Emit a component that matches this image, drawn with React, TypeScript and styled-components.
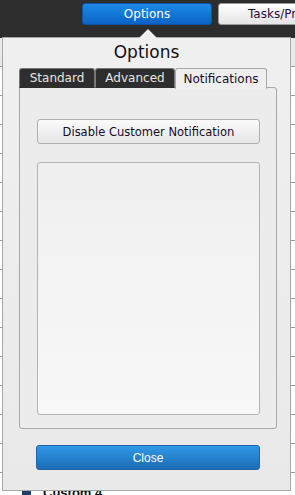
import React from "react";
import styled, {createGlobalStyle} from "styled-components";

const GlobalStyle = createGlobalStyle`
  html, body {
    margin: 0;
    padding: 0;
    background: #ffffff;
    font-family: "DejaVu Sans", Verdana, sans-serif;
  }
`

const Page = styled.div`
  position: relative;
  width: 295px;
  height: 495px;
  overflow: hidden;
  background: #ffffff;
`

const TopBar = styled.div`
  height: 30px;
  background: #2d2d2d;
  display: flex;
  align-items: flex-start;
  padding: 3px 0 0 82px;
  box-sizing: border-box;
  gap: 6px;
`

const TopButton = styled.div<{primary?: boolean}>`
  height: 22px;
  box-sizing: border-box;
  display: flex;
  align-items: center;
  font-size: 12px;
  border-radius: 3px;
  flex-shrink: 0;
  white-space: nowrap;
  color: ${p => p.primary ? '#ffffff' : '#2a0b3a'};
  width: ${p => p.primary ? '130px' : '90px'};
  padding-left: ${p => p.primary ? '0' : '29px'};
  justify-content: ${p => p.primary ? 'center' : 'flex-start'};
  background: ${p => p.primary
    ? 'linear-gradient(#1c8ae8, #0a63c4)'
    : 'linear-gradient(#ffffff, #e4e4e4)'};
  border: 1px solid ${p => p.primary ? '#0a55a8' : '#9a9a9a'};
`

const SubBar = styled.div`
  height: 8px;
  background: #2d2d2d;
`

const List = styled.div`
  display: flex;
  flex-direction: column;
`

const ListRow = styled.div<{tone: string}>`
  height: 28px;
  border-bottom: 1px solid #9a9a9a;
  background: ${p => p.tone};
`

const Footer = styled.div`
  position: absolute;
  left: 22px;
  bottom: -5px;
  display: flex;
  align-items: center;
  gap: 12px;
  font-family: "Liberation Sans", Arial, sans-serif;
  font-weight: bold;
  font-size: 13px;
  color: #111;
`

const Swatch = styled.div`
  width: 9px;
  height: 9px;
  background: #1d3d6a;
`

const Popover = styled.div`
  position: absolute;
  left: 2px;
  top: 37px;
  width: 289px;
  height: 454px;
  box-sizing: border-box;
  border: 1px solid #a8a8a8;
  background: linear-gradient(#f0f0f0, #e9e9e9);
  display: flex;
  flex-direction: column;
  padding: 0 14px 0 16px;
`

const Arrow = styled.div`
  position: absolute;
  top: -9px;
  left: 136px;
  width: 0;
  height: 0;
  border-left: 9px solid transparent;
  border-right: 9px solid transparent;
  border-bottom: 9px solid #f0f0f0;
`

const Title = styled.div`
  text-align: center;
  font-size: 17px;
  color: #111;
  height: 30px;
  line-height: 28px;
  padding-right: 2px;
`

const TabRow = styled.div`
  display: flex;
  height: 20px;
  position: relative;
  z-index: 1;
`

const Tab = styled.div<{active?: boolean; w: number}>`
  width: ${p => p.w}px;
  box-sizing: border-box;
  display: flex;
  align-items: center;
  justify-content: center;
  font-size: 12px;
  border-radius: 3px 3px 0 0;
  color: ${p => p.active ? '#1a0a2a' : '#e6e6e6'};
  background: ${p => p.active ? '#efefef' : '#2e2e2e'};
  border: 1px solid ${p => p.active ? '#a8a8a8' : '#777'};
  border-bottom: ${p => p.active ? '1px solid #efefef' : '1px solid #2e2e2e'};
  height: ${p => p.active ? '21px' : '20px'};
`

const Panel = styled.div`
  margin-top: -1px;
  width: 258px;
  height: 342px;
  box-sizing: border-box;
  border: 1px solid #a8a8a8;
  border-radius: 0 3px 3px 3px;
  background: #ececec;
  display: flex;
  flex-direction: column;
  padding: 31px 16px 13px 17px;
  gap: 18px;
`

const PlainButton = styled.div`
  height: 25px;
  box-sizing: border-box;
  border: 1px solid #b0b0b0;
  border-radius: 3px;
  background: linear-gradient(#fbfbfb, #e6e6e6);
  display: flex;
  align-items: center;
  justify-content: center;
  font-size: 11.5px;
  color: #1a0a2a;
`

const MessageBox = styled.div`
  flex: 1;
  border: 1px solid #b4b4b4;
  border-radius: 3px;
  background: linear-gradient(#efefef, #f8f8f8);
`

const CloseButton = styled.div`
  margin: 16px 16px 0 17px;
  height: 25px;
  box-sizing: border-box;
  border: 1px solid #1a64a8;
  border-radius: 3px;
  background: linear-gradient(#3199e8, #1a6bb3);
  display: flex;
  align-items: center;
  justify-content: center;
  font-family: "Liberation Sans", Arial, sans-serif;
  font-size: 12px;
  color: #ffffff;
`

const rows = ['#e9e9e9', '#ffffff', '#ffffff', '#ffffff', '#ffffff', '#ffffff', '#ffffff', '#ffffff', '#ffffff', '#ffffff', '#ffffff', '#ffffff', '#ffffff', '#ffffff', '#ffffff', '#ffffff']

export default function App() {
    return (
        <Page>
            <GlobalStyle/>
            <TopBar>
                <TopButton primary>Options</TopButton>
                <TopButton>Tasks/Pr</TopButton>
            </TopBar>
            <SubBar/>
            <List>
                {rows.map((tone, i) => <ListRow key={i} tone={tone}/>)}
            </List>
            <Footer>
                <Swatch/>
                Custom 4
            </Footer>
            <Popover>
                <Arrow/>
                <Title>Options</Title>
                <TabRow>
                    <Tab w={76}>Standard</Tab>
                    <Tab w={80}>Advanced</Tab>
                    <Tab w={92} active>Notifications</Tab>
                </TabRow>
                <Panel>
                    <PlainButton>Disable Customer Notification</PlainButton>
                    <MessageBox/>
                </Panel>
                <CloseButton>Close</CloseButton>
            </Popover>
        </Page>
    )
}
